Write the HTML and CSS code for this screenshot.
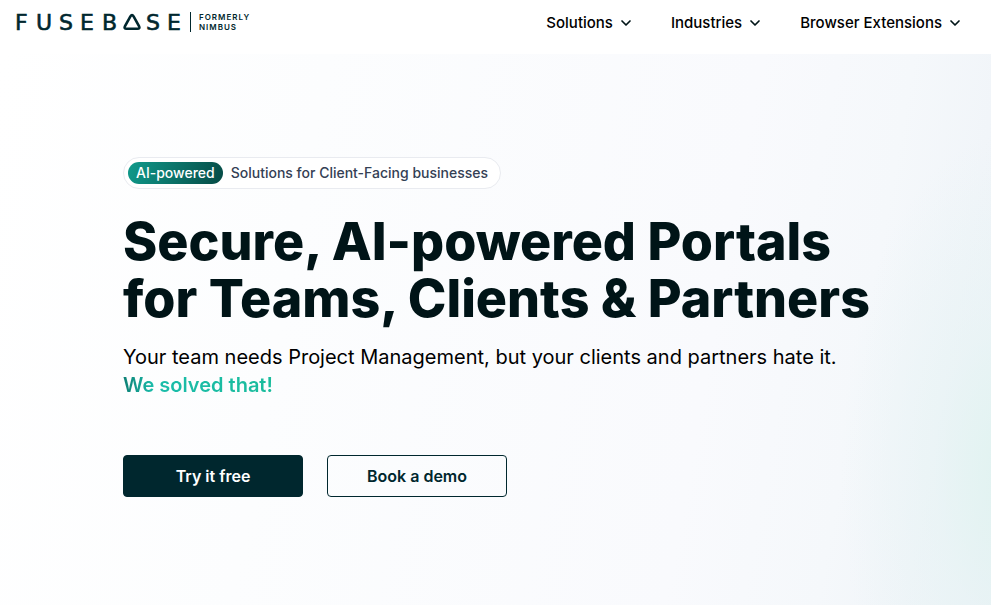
FILE: index.html
```html
<!DOCTYPE html>
<html lang="en">
<head>
<meta charset="utf-8">
<meta name="viewport" content="width=device-width, initial-scale=1">
<title>FuseBase</title>
<link rel="stylesheet" href="styles.css">
</head>
<body>
<header class="header">
  <a class="logo" href="#">
    <svg class="wordmark" width="166" height="18" viewBox="0 0 166 18">
      <text y="17" x="-1 20 43 64 86 130 151">FUSEBSE</text>
      <path d="M110.6 15.8 Q107.6 15.8 109 13.2 L114.4 3.4 Q116 0.9 117.6 3.4 L123 13.2 Q124.4 15.8 121.4 15.8 Z"/>
    </svg>
    <span class="formerly">FORMERLY<br>NIMBUS</span>
  </a>
  <nav class="nav">
    <button class="nav-item" type="button">Solutions
      <svg class="chevron" width="10" height="6" viewBox="0 0 10 6"><path d="M1 1l4 4 4-4"/></svg>
    </button>
    <button class="nav-item" type="button">Industries
      <svg class="chevron" width="10" height="6" viewBox="0 0 10 6"><path d="M1 1l4 4 4-4"/></svg>
    </button>
    <button class="nav-item" type="button">Browser Extensions
      <svg class="chevron" width="10" height="6" viewBox="0 0 10 6"><path d="M1 1l4 4 4-4"/></svg>
    </button>
  </nav>
</header>
<main class="hero">
  <p class="pill"><span class="badge">AI-powered</span>Solutions for Client-Facing businesses</p>
  <h1 class="title">Secure, AI-powered Portals<br>for Teams, Clients &amp; Partners</h1>
  <p class="lead">Your team needs Project Management, but your clients and partners hate it.<br><strong class="accent">We solved that!</strong></p>
  <div class="actions">
    <a class="button button-primary" href="#">Try it free</a>
    <a class="button button-outline" href="#">Book a demo</a>
  </div>
</main>
</body>
</html>
```
FILE: styles.css
```css
* {
  box-sizing: border-box;
}

body {
  margin: 0;
  min-height: 100vh;
  display: flex;
  flex-direction: column;
  background: #fff;
  color: #001417;
  font-family: Inter, "Liberation Sans", sans-serif;
}

.header {
  display: flex;
  align-items: flex-start;
  justify-content: space-between;
  height: 54px;
  padding: 12px 31px 0 16px;
}

.logo {
  display: flex;
  align-items: center;
  gap: 8px;
  color: #00272e;
  text-decoration: none;
}

.wordmark {
  overflow: visible;
}

.wordmark text {
  font-family: "DejaVu Sans", sans-serif;
  font-size: 22px;
  fill: #00272e;
  stroke: #00272e;
  stroke-width: 0.6px;
}

.wordmark path {
  fill: none;
  stroke: #00272e;
  stroke-width: 2.6;
}

.formerly {
  padding-left: 8px;
  border-left: 1px solid #00272e;
  font-size: 8px;
  line-height: 10px;
  font-weight: 600;
  letter-spacing: 1px;
}

.nav {
  display: flex;
  gap: 40px;
}

.nav-item {
  display: flex;
  align-items: center;
  gap: 8px;
  padding: 0;
  border: 0;
  background: none;
  color: #000;
  font: 500 15px/22px Inter, "Liberation Sans", sans-serif;
}

.chevron {
  overflow: visible;
  fill: none;
  stroke: #001417;
  stroke-width: 1.7;
  stroke-linecap: round;
  stroke-linejoin: round;
}

.hero {
  flex: 1;
  display: flex;
  flex-direction: column;
  align-items: flex-start;
  padding: 103px 40px 40px 123px;
  background:
    radial-gradient(ellipse 170px 340px at 102% 76%, #e0f3f0 0%, rgba(228, 243, 243, 0.5) 45%, rgba(240, 247, 250, 0) 100%),
    linear-gradient(100deg, #fff 0%, #fcfdfe 30%, #f9fafd 70%, #f5f8fb 84%, #edf2f7 100%);
}

.pill {
  display: flex;
  align-items: center;
  gap: 8px;
  margin: 0;
  padding: 4px 12px 4px 4px;
  border: 1px solid #e9ebf0;
  border-radius: 16px;
  background: #fff;
  color: #344054;
  font-size: 14px;
  line-height: 22px;
  font-weight: 500;
}

.badge {
  padding: 0 8px;
  border-radius: 11px;
  background: linear-gradient(110deg, #109a8b, #064a45);
  color: #fff;
}

.title {
  margin: 24px 0 0;
  font-size: 52px;
  line-height: 57px;
  font-weight: 800;
}

.lead {
  margin: 16px 0 0;
  color: #000;
  font-size: 20px;
  line-height: 28px;
}

.accent {
  background: linear-gradient(90deg, #0d7f74, #1abcaa 20%, #1abc9c);
  background-clip: text;
  color: transparent;
  font-weight: 600;
}

.actions {
  display: flex;
  gap: 24px;
  margin-top: 56px;
}

.button {
  width: 180px;
  border: 1px solid #00272e;
  border-radius: 4px;
  font-size: 16px;
  line-height: 40px;
  font-weight: 600;
  text-align: center;
  text-decoration: none;
}

.button-primary {
  background: #00272e;
  color: #fff;
}

.button-outline {
  color: #00272e;
}
```
